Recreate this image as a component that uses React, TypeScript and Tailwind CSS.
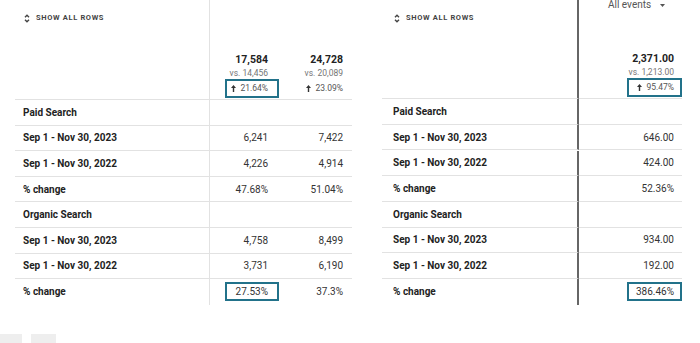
const FONT = "font-['Roboto','Liberation_Sans',sans-serif]";

type Row = { label: string; values: string[]; boxed?: boolean };

const leftRows: Row[] = [
  { label: "Paid Search", values: ["", ""] },
  { label: "Sep 1 - Nov 30, 2023", values: ["6,241", "7,422"] },
  { label: "Sep 1 - Nov 30, 2022", values: ["4,226", "4,914"] },
  { label: "% change", values: ["47.68%", "51.04%"] },
  { label: "Organic Search", values: ["", ""] },
  { label: "Sep 1 - Nov 30, 2023", values: ["4,758", "8,499"] },
  { label: "Sep 1 - Nov 30, 2022", values: ["3,731", "6,190"] },
  { label: "% change", values: ["27.53%", "37.3%"], boxed: true },
];

const rightRows: Row[] = [
  { label: "Paid Search", values: [""] },
  { label: "Sep 1 - Nov 30, 2023", values: ["646.00"] },
  { label: "Sep 1 - Nov 30, 2022", values: ["424.00"] },
  { label: "% change", values: ["52.36%"] },
  { label: "Organic Search", values: [""] },
  { label: "Sep 1 - Nov 30, 2023", values: ["934.00"] },
  { label: "Sep 1 - Nov 30, 2022", values: ["192.00"] },
  { label: "% change", values: ["386.46%"], boxed: true },
];

function UpDown() {
  return (
    <svg width="6" height="9" viewBox="0 0 6 9" fill="none" stroke="#444" strokeWidth="1.4">
      <path d="M1 3.2 L3 1.2 L5 3.2" />
      <path d="M1 5.8 L3 7.8 L5 5.8" />
    </svg>
  );
}

function UpArrow() {
  return (
    <svg width="5" height="7" viewBox="0 0 5 7" className="mr-[4px]">
      <path d="M2.5 0 L5 3 H3.2 V7 H1.8 V3 H0 Z" fill="#333" />
    </svg>
  );
}

function ShowAll({ pad }: { pad: string }) {
  return (
    <div className={`flex items-center gap-[6px] pt-[13px] ${pad}`}>
      <UpDown />
      <span className="text-[7.5px] font-bold tracking-[0.65px] text-[#444] leading-[10px]">
        SHOW ALL ROWS
      </span>
    </div>
  );
}

function Box({ children, pr }: { children: React.ReactNode; pr: string }) {
  return (
    <div className={`flex h-[19px] items-center justify-end border-2 border-[#22728a] ${pr}`}>
      {children}
    </div>
  );
}

function Total({ value, vs, pct, boxW, pr }: { value: string; vs: string; pct: string; boxW?: string; pr: string }) {
  return (
    <div className="flex h-full flex-col items-end justify-end pb-[1px]">
      <div className={`text-[10.5px] font-bold leading-[14px] text-[#222] ${pr}`}>{value}</div>
      <div className={`mt-[1px] text-[8.5px] leading-[11px] text-[#757575] ${pr}`}>{vs}</div>
      {boxW ? (
        <div className={boxW}>
          <Box pr={pr === "pr-[11px]" ? "pr-[9px]" : "pr-[6px]"}>
            <UpArrow />
            <span className="text-[8.5px] text-[#555]">{pct}</span>
          </Box>
        </div>
      ) : (
        <div className={`flex h-[19px] items-center ${pr}`}>
          <UpArrow />
          <span className="text-[8.5px] text-[#555]">{pct}</span>
        </div>
      )}
    </div>
  );
}

function LeftTable() {
  return (
    <div className="ml-[15px] grid w-[337px] grid-cols-[195px_69px_73px]">
      <div className="h-[100px] border-r border-b border-[#e2e2e2]">
        <ShowAll pad="pl-[9px]" />
      </div>
      <div className="h-[100px] border-b border-[#e2e2e2]">
        <Total value="17,584" vs="vs. 14,456" pct="21.64%" boxW="w-[54px]" pr="pr-[11px]" />
      </div>
      <div className="h-[100px] border-b border-[#e2e2e2]">
        <Total value="24,728" vs="vs. 20,089" pct="23.09%" pr="pr-[9px]" />
      </div>
      {leftRows.map((r, i) => {
        const b = i < leftRows.length - 1 ? "border-b" : "";
        return [
          <div key={`l${i}`} className={`flex h-[25.6px] items-center border-r border-[#e2e2e2] pl-[8px] text-[10px] font-bold text-[#222] ${b}`}>
            {r.label}
          </div>,
          <div key={`a${i}`} className={`flex h-[25.6px] items-center justify-end border-[#e2e2e2] text-[10px] text-[#333] ${b}`}>
            {r.boxed ? (
              <div className="w-[54px]">
                <Box pr="pr-[9px]">{r.values[0]}</Box>
              </div>
            ) : (
              <span className="pr-[11px]">{r.values[0]}</span>
            )}
          </div>,
          <div key={`b${i}`} className={`flex h-[25.6px] items-center justify-end border-[#e2e2e2] pr-[9px] text-[10px] text-[#333] ${b}`}>
            {r.values[1]}
          </div>,
        ];
      })}
    </div>
  );
}

function RightTable() {
  return (
    <div className="ml-[30px] grid w-[300px] grid-cols-[197px_103px]">
      <div className="h-[99px] border-r-2 border-r-[#666] border-b border-b-[#e2e2e2]">
        <ShowAll pad="pl-[12px]" />
      </div>
      <div className="relative h-[99px] border-b border-[#e2e2e2]">
        <div className="absolute top-[-1px] left-[29px] flex items-center gap-[9px] text-[10px] leading-[12px] text-[#555]">
          <span>All events</span>
          <svg width="5" height="3" viewBox="0 0 5 3">
            <path d="M0 0 H5 L2.5 3 Z" fill="#555" />
          </svg>
        </div>
        <Total value="2,371.00" vs="vs. 1,213.00" pct="95.47%" boxW="w-[55px]" pr="pr-[8px]" />
      </div>
      {rightRows.map((r, i) => {
        const b = i < rightRows.length - 1 ? "border-b border-b-[#e2e2e2]" : "";
        return [
          <div key={`l${i}`} className={`flex h-[25.6px] items-center border-r-2 border-r-[#666] pl-[11px] text-[10px] font-bold text-[#222] ${b}`}>
            {r.label}
          </div>,
          <div key={`a${i}`} className={`flex h-[25.6px] items-center justify-end text-[10px] text-[#333] ${b}`}>
            {r.boxed ? (
              <div className="w-[55px]">
                <Box pr="pr-[6px]">{r.values[0]}</Box>
              </div>
            ) : (
              <span className="pr-[8px]">{r.values[0]}</span>
            )}
          </div>,
        ];
      })}
    </div>
  );
}

export default function App() {
  return (
    <div className={`flex h-[343px] w-[700px] flex-col overflow-hidden bg-white ${FONT}`}>
      <div className="flex">
        <LeftTable />
        <RightTable />
      </div>
      <div className="mt-[29px] flex">
        <div className="h-[12px] w-[22px] bg-[#eeeeee]" />
        <div className="ml-[9px] h-[12px] w-[25px] bg-[#eeeeee]" />
      </div>
    </div>
  );
}
